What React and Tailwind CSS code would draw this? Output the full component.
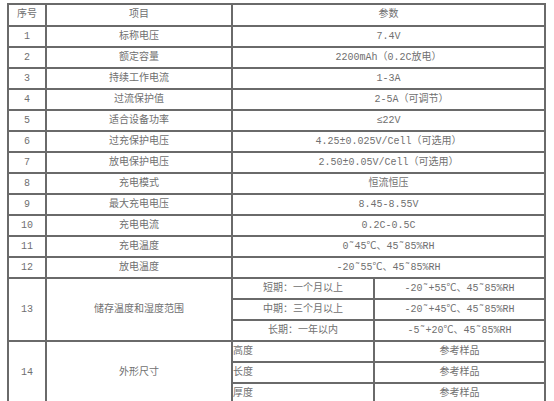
import React from "react";

const ROWS = [
  ["1", "标称电压", "7.4V"],
  ["2", "额定容量", "2200mAh（0.2C放电）"],
  ["3", "持续工作电流", "1-3A"],
  ["4", "过流保护值", "2-5A（可调节）", "pl-[46px]"],
  ["5", "适合设备功率", "≤22V"],
  ["6", "过充保护电压", "4.25±0.025V/Cell（可选用）"],
  ["7", "放电保护电压", "2.50±0.05V/Cell（可选用）"],
  ["8", "充电模式", "恒流恒压"],
  ["9", "最大充电电压", "8.45-8.55V"],
  ["10", "充电电流", "0.2C-0.5C"],
  ["11", "充电温度", "0˜45℃、45˜85%RH"],
  ["12", "放电温度", "-20˜55℃、45˜85%RH"],
];

const STORAGE = [
  ["短期：一个月以上", "-20˜+55℃、45˜85%RH"],
  ["中期：三个月以上", "-20˜+45℃、45˜85%RH"],
  ["长期：一年以内", "-5˜+20℃、45˜85%RH"],
];

const SIZE = ["高度", "长度", "厚度"];

const cell = "bg-white flex items-center justify-center whitespace-nowrap";

export default function App() {
  return (
    <div
      className="bg-white min-h-screen pt-[3px] pl-[7px] text-[10px] leading-none text-[#707070]"
      style={{ fontFamily: '"Liberation Mono", "Noto Sans CJK SC", monospace' }}
    >
      <div className="grid w-max grid-cols-[36px_184px_140px_169px] grid-rows-[20px_repeat(18,19px)] gap-[2px] p-[2px] bg-[#6a6a6a]">
        <div className={cell}>序号</div>
        <div className={cell}>项目</div>
        <div className={`${cell} col-span-2`}>参数</div>

        {ROWS.map(([n, item, val, extra]) => (
          <React.Fragment key={n}>
            <div className={cell}>{n}</div>
            <div className={cell}>{item}</div>
            <div className={`${cell} col-span-2 ${extra || ""}`}>{val}</div>
          </React.Fragment>
        ))}

        <div className={`${cell} row-span-3`}>13</div>
        <div className={`${cell} row-span-3`}>储存温度和湿度范围</div>
        {STORAGE.map(([term, val]) => (
          <React.Fragment key={term}>
            <div className={cell}>{term}</div>
            <div className={cell}>{val}</div>
          </React.Fragment>
        ))}

        <div className={`${cell} row-span-3`}>14</div>
        <div className={`${cell} row-span-3`}>外形尺寸</div>
        {SIZE.map((s) => (
          <React.Fragment key={s}>
            <div className="bg-white flex items-center justify-start">{s}</div>
            <div className={cell}>参考样品</div>
          </React.Fragment>
        ))}
      </div>
    </div>
  );
}
